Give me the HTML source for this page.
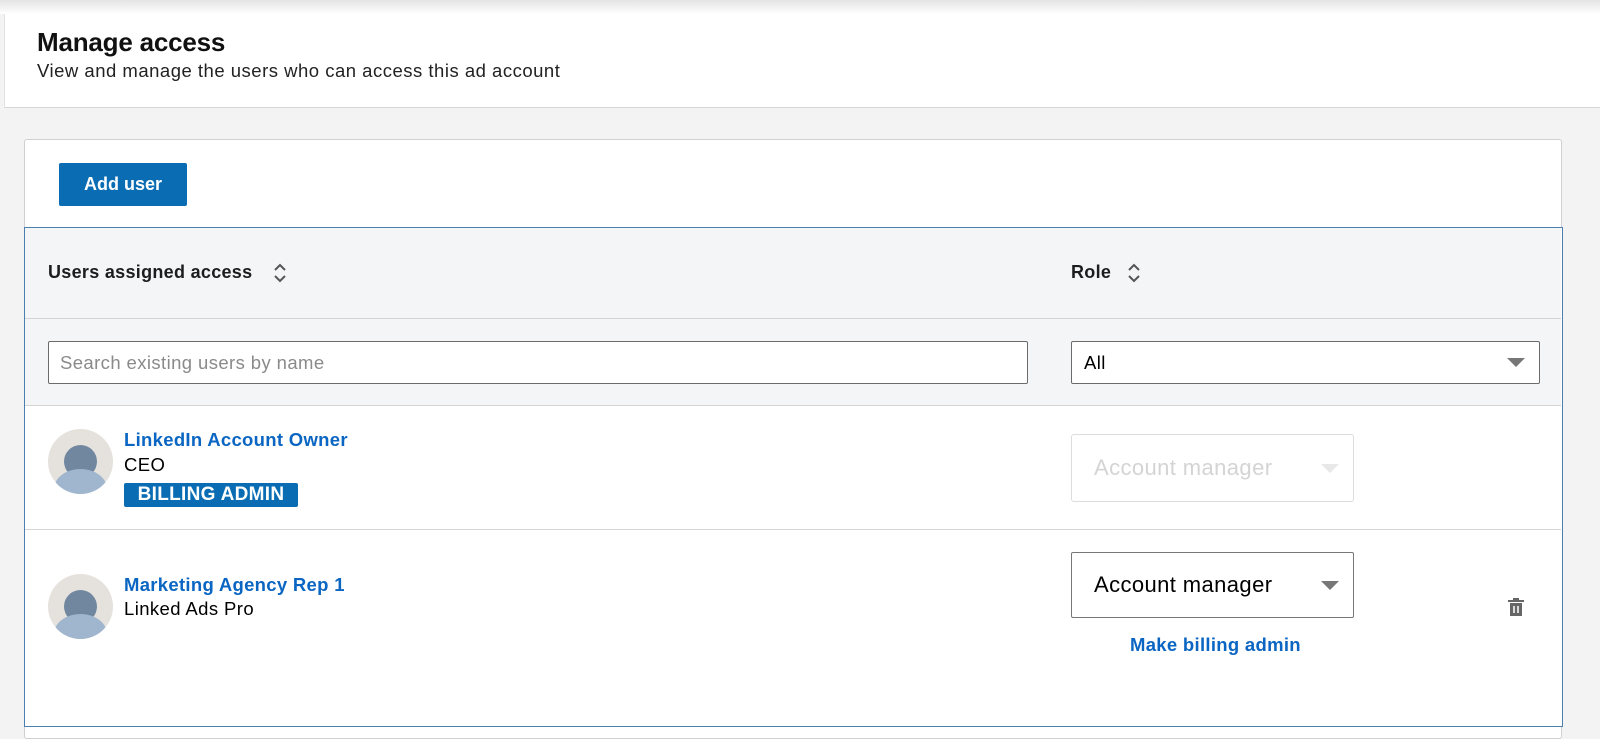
<!DOCTYPE html>
<html><head><style>
*{margin:0;padding:0;box-sizing:border-box}
body{width:1600px;height:702px;overflow:hidden;background:#f3f3f3;font-family:"Liberation Sans",Arial,sans-serif;position:relative;color:#000;letter-spacing:0.4px}
.a{position:absolute;white-space:nowrap}
.top{left:4px;top:0;width:1596px;height:108px;background:#fff;border-bottom:1px solid #d6d6d6;border-left:1px solid #e2e2e2}
.shade{left:0;top:0;width:1600px;height:14px;background:linear-gradient(#e4e4e4,#fff)}
.card{left:24px;top:139px;width:1538px;height:600px;background:#fff;border:1px solid #d0d0d0;border-radius:3px}
.tbl{left:24px;top:227px;width:1539px;height:500px;border:1.5px solid #4a7fb0;background:#fff}
.hdr{left:25px;top:228px;width:1536px;height:178px;background:#f4f5f7;border-bottom:1px solid #d4d4d4}
.blue{color:#0a66c2}
.inp{border:1px solid #6b6b6b;border-radius:2px;background:#fff}
.tri{width:0;height:0;border-left:9px solid transparent;border-right:9px solid transparent;border-top:9px solid #777}
.av{width:65px;height:65px;border-radius:50%;background:#e5e1dc;overflow:hidden}
.av .h{position:absolute;left:16px;top:16px;width:33px;height:33px;border-radius:50%;background:#70879f}
.av .b{position:absolute;left:6px;top:40px;width:53px;height:40px;border-radius:50%;background:#9fb6ce}
</style></head><body>
<div class="a top"></div>
<div class="a shade"></div>
<div class="a" style="left:37px;top:27px;font-size:26px;font-weight:bold;letter-spacing:-0.2px;color:#111">Manage access</div>
<div class="a" style="left:37px;top:60px;font-size:18.5px;color:#222;letter-spacing:0.5px">View and manage the users who can access this ad account</div>
<div class="a card"></div>
<div class="a" style="left:59px;top:163px;width:128px;height:43px;background:#0a6db3;border-radius:2px;color:#fff;font-weight:bold;font-size:18px;line-height:43px;text-align:center;letter-spacing:0">Add user</div>
<div class="a tbl"></div>
<div class="a hdr"></div>
<div class="a" style="left:25px;top:318px;width:1536px;height:1px;background:#d4d4d4"></div>
<div class="a" style="left:48px;top:262px;font-size:18px;font-weight:bold;color:#1d1d1d;letter-spacing:0.3px">Users assigned access</div>
<svg class="a" style="left:272px;top:262px" width="16" height="22" viewBox="0 0 16 22"><path d="M3 8l5-5 5 5M3 14l5 5 5-5" fill="none" stroke="#555" stroke-width="2"/></svg>
<div class="a" style="left:1071px;top:262px;font-size:18px;font-weight:bold;color:#1d1d1d;letter-spacing:0.3px">Role</div>
<svg class="a" style="left:1126px;top:262px" width="16" height="22" viewBox="0 0 16 22"><path d="M3 8l5-5 5 5M3 14l5 5 5-5" fill="none" stroke="#555" stroke-width="2"/></svg>
<div class="a inp" style="left:48px;top:341px;width:980px;height:43px"></div>
<div class="a" style="left:60px;top:352px;font-size:18.5px;color:#8a8a8a">Search existing users by name</div>
<div class="a inp" style="left:1071px;top:341px;width:469px;height:43px"></div>
<div class="a" style="left:1084px;top:352px;font-size:18.5px">All</div>
<div class="a tri" style="left:1507px;top:358px"></div>

<div class="a" style="left:25px;top:529px;width:1536px;height:1px;background:#d4d4d4"></div>
<div class="a av" style="left:48px;top:429px"><div class="h"></div><div class="b"></div></div>
<div class="a blue" style="left:124px;top:429px;font-size:18.5px;font-weight:bold;letter-spacing:0.3px">LinkedIn Account Owner</div>
<div class="a" style="left:124px;top:454px;font-size:18.5px">CEO</div>
<div class="a" style="left:124px;top:483px;width:174px;height:24px;background:#0a6db3;border-radius:2px;color:#fff;font-weight:bold;font-size:19px;line-height:24px;text-align:center;letter-spacing:0.3px">BILLING ADMIN</div>
<div class="a" style="left:1071px;top:434px;width:283px;height:68px;border:1px solid #ddd;border-radius:3px"></div>
<div class="a" style="left:1094px;top:455px;font-size:22px;color:#d4d4d4">Account manager</div>
<div class="a tri" style="left:1321px;top:464px;border-top-color:#e8e8e8"></div>

<div class="a av" style="left:48px;top:574px"><div class="h"></div><div class="b"></div></div>
<div class="a blue" style="left:124px;top:574px;font-size:18.5px;font-weight:bold;letter-spacing:0.3px">Marketing Agency Rep 1</div>
<div class="a" style="left:124px;top:598px;font-size:18.5px">Linked Ads Pro</div>
<div class="a inp" style="left:1071px;top:552px;width:283px;height:66px;border-color:#777"></div>
<div class="a" style="left:1094px;top:572px;font-size:22px">Account manager</div>
<div class="a tri" style="left:1321px;top:581px"></div>
<div class="a blue" style="left:1130px;top:634px;font-size:18.5px;font-weight:bold;letter-spacing:0.3px">Make billing admin</div>
<svg class="a" style="left:1507px;top:596px" width="18" height="22" viewBox="0 0 18 22"><path d="M6 2h6v2h5v2H1V4h5z" fill="#666"/><path d="M3 7h12v13H3z" fill="#666"/><path d="M7 10v7M11 10v7" stroke="#fff" stroke-width="1.5"/></svg>
</body></html>
